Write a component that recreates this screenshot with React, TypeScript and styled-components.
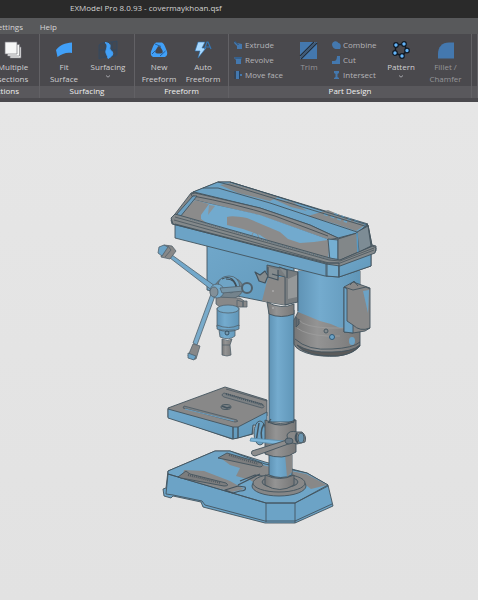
import React from 'react';
import styled, { createGlobalStyle } from 'styled-components';

const GlobalStyle = createGlobalStyle`
  * { box-sizing: border-box; }
  body { margin: 0; background: #e4e4e4; }
  body, button { font-family: "Open Sans", "Noto Sans", sans-serif; font-size: 8px; line-height: 12px; }
`;

const Window = styled.div`
  display: flex;
  flex-direction: column;
  min-height: 100vh;
  overflow: hidden;
`;

const TitleBar = styled.header`
  height: 18px;
  padding: 2px 0 0 70px;
  background: #2a2a2a;
  color: #d2d2d2;
  white-space: nowrap;
`;

const MenuBar = styled.nav`
  display: flex;
  height: 16px;
  background: #58595b;
`;

const MenuSlot = styled.div<{ $width: number }>`
  display: flex;
  flex: 0 0 ${p => p.$width}px;
  justify-content: flex-end;
  align-items: center;
  overflow: hidden;
`;

const MenuButton = styled.button`
  padding: 2px 0 0;
  border: 0;
  background: none;
  color: #d6d6d6;
`;

const Ribbon = styled.div`
  display: flex;
  height: 68px;
  padding-bottom: 4px;
  background: #4a494d;
`;

const Group = styled.section<{ $width?: number }>`
  display: flex;
  flex-direction: column;
  flex: ${p => (p.$width ? `0 0 ${p.$width}px` : '1 0 0')};
  overflow: hidden;
  border-right: 1px solid #626165;
`;

const Tools = styled.div<{ $clipStart?: boolean }>`
  display: flex;
  flex: 1;
  justify-content: ${p => (p.$clipStart ? 'flex-end' : 'flex-start')};
  padding-right: ${p => (p.$clipStart ? 4 : 0)}px;
`;

const GroupTitle = styled.h2<{ $clipStart?: boolean }>`
  display: flex;
  justify-content: ${p => (p.$clipStart ? 'flex-end' : 'center')};
  height: 12px;
  margin: 0;
  padding-right: ${p => (p.$clipStart ? 20 : 0)}px;
  background: #59585c;
  color: #f0f0f0;
  font-size: 8px;
  font-weight: 400;
  line-height: 10px;
`;

const BigTool = styled.button<{ $width: number }>`
  display: flex;
  flex-direction: column;
  align-items: center;
  flex: 0 0 ${p => p.$width}px;
  padding: 6px 0 0;
  border: 0;
  background: none;
  color: #d0d0d2;
  white-space: nowrap;
  &:disabled { color: #96969a; }
`;

const Label = styled.span`
  height: 12px;
`;

const SmallTools = styled.div<{ $width: number }>`
  display: flex;
  flex-direction: column;
  gap: 3px;
  flex: 0 0 ${p => p.$width}px;
  padding: 5px 0 0 4px;
`;

const SmallTool = styled.button`
  display: flex;
  align-items: center;
  gap: 2px;
  padding: 0;
  border: 0;
  background: none;
  color: #b4b4b8;
  white-space: nowrap;
`;

const Viewport = styled.main`
  flex: 1;
  padding: 68px 0 0 150px;
  background: linear-gradient(#e6e6e6, #e2e2e2);
`;

const Model = styled.svg`
  display: block;
`;

const ToolIcon = styled.svg`
  flex: none;
  margin-bottom: 1px;
`;

const ChevronIcon = styled.svg`
  flex: none;
  margin-top: 1px;
`;

const Icon = ({ children }: { children: React.ReactNode }) => (
  <ToolIcon width="20" height="20" viewBox="0 0 20 20" aria-hidden="true">{children}</ToolIcon>
);

const SmallIcon = ({ children }: { children: React.ReactNode }) => (
  <svg width="10" height="10" viewBox="0 0 10 10" aria-hidden="true" fill="#4478ae">{children}</svg>
);

const Chevron = () => (
  <ChevronIcon width="6" height="5" viewBox="0 0 6 5" aria-hidden="true">
    <path d="M1 1.5 3 3.2 5 1.5" fill="none" stroke="#a5a5aa" />
  </ChevronIcon>
);

const MultipleIcon = () => (
  <Icon>
    <g fill="#f7f7f7" stroke="#77777b" strokeWidth=".7">
      <path d="M7 7h11v11H7z" />
      <path d="M4.500 4.500h12v11.500h-12z" />
      <path d="M2 2h12v12H2z" />
    </g>
  </Icon>
);

const FitIcon = () => (
  <Icon><path d="M2 10C6 5 11 3 18 2.500V13C12 12 8 14 3.500 17Z" fill="#41a0f8" /></Icon>
);

const SurfacingIcon = () => (
  <Icon>
    <path d="M1 5c4-4 10-2 18-4v14c-4 3-13 1-18 4zM7 3v15M14 2v15M1 10h18" fill="#434851" stroke="#2f4a68" strokeWidth=".7" />
    <path d="M7 2.500c8 1 4 5 5 7 4 3 4 6-2 9 0-3-3-5-2-8 1-3 2-6-1-8Z" fill="#41a0f8" stroke="#41a0f8" />
  </Icon>
);

const FreeformIcon = () => (
  <Icon>
    <path d="m7 2.500 6 0q2 1 3 4l2 5q1 4-2 5.500H4q-3-1.500-2-5.500l2-5q1-3 3-4Z" fill="#41a0f8" />
    <path d="M10 6q1 0 2 2l1.500 2.500q1 3-2 3h-3q-3 0-2-3L8 8q1-2 2-2Z" fill="#46474e" />
    <path d="m6 4 6 2.500M3 14l3.500-3.500M16.500 11l-5.500 5" stroke="#2461a0" strokeWidth="1" />
  </Icon>
);

const AutoIcon = () => (
  <Icon>
    <path d="M5 2h7L9 8h4L5 18l2-7H2Z" fill="#a9d9ff" stroke="#286eaf" strokeWidth=".6" />
    <path d="m11.500 9 2.500-7h1l3 7M12.500 7h4.500" fill="none" stroke="#3478b8" strokeWidth="1.200" />
  </Icon>
);

const TrimIcon = () => (
  <Icon>
    <path d="M1 2h17v17H1z" fill="#4478ae" />
    <path d="M1 16 15 2M2 19 18 3" stroke="#252e39" strokeWidth="1.200" />
    <path d="M1 18 17 2" stroke="#4b5a6b" strokeWidth="1" />
  </Icon>
);

const PatternIcon = () => (
  <Icon>
    <path d="m5 5 8-1 3 6.500-5 5.500-7-3Z" fill="none" stroke="#101922" strokeWidth="1.500" />
    <g fill="#64b5fa" stroke="#111b26" strokeWidth="1.200">
      <circle cx="5" cy="5" r="2.300" /><circle cx="13" cy="4" r="2.300" />
      <circle cx="16" cy="10.500" r="2.300" /><circle cx="11" cy="16" r="2.300" />
      <circle cx="4" cy="13" r="2.300" />
    </g>
  </Icon>
);

const FilletIcon = () => (
  <Icon><path d="M2 18.500V14C2 7 6 2.500 13 2.500h5v16Z" fill="#4478ae" /></Icon>
);

const smallIcons = {
  Extrude: <><path d="M2 1l2 2 5 1v5H4V6L1 3Z" /><path d="m1.500 1 4 4" stroke="#294967" /></>,
  Revolve: <><path d="M2 2h7L8 5v4H3V5L1 3Z" /><path d="M2 3h7" stroke="#24496d" /></>,
  'Move face': <><path d="M3 1h3v8H3zM7 4h2v2H7z" /><path d="M2 1v8M6.500 1v8" stroke="#233f5d" /></>,
  Combine: <path d="M1 4a3.500 3.500 0 0 1 6.500-1c2 0 3 3 1.500 6H4.500C2 8.500 1 6 1 4Z" />,
  Cut: <path d="M1 9V6h2q3 0 3-5h3v8Z" />,
  Intersect: <path d="M3 1h5v2L6.500 4v3L8 8v1H3V8l1.500-1V4L3 3Z" />,
};

const SmallToolList = ({ width, names }: { width: number; names: (keyof typeof smallIcons)[] }) => (
  <SmallTools $width={width}>
    {names.map(name => (
      <SmallTool key={name} type="button" disabled>
        <SmallIcon>{smallIcons[name]}</SmallIcon>{name}
      </SmallTool>
    ))}
  </SmallTools>
);

const GRAY = '#888888';
const BLUE = '#6ca3c6';

const DrillPress = () => (
  <Model width="240" height="360" viewBox="150 170 240 360" role="img" aria-label="Drill press model">
    <defs>
      <linearGradient id="pole">
        <stop offset="0" stopColor="#5f93b5" /><stop offset=".35" stopColor="#74abce" /><stop offset="1" stopColor="#6096b8" />
      </linearGradient>
      <linearGradient id="steel">
        <stop offset="0" stopColor="#777" /><stop offset=".35" stopColor="#949494" /><stop offset="1" stopColor="#787878" />
      </linearGradient>
      <linearGradient id="face" x2="1" y2="1">
        <stop offset="0" stopColor="#70a7ca" /><stop offset="1" stopColor="#6299bb" />
      </linearGradient>
    </defs>
    <g stroke="#43535e" strokeWidth=".9" strokeLinejoin="round">
      <g>
        <path d="M168 471 215 451 230 451 265 462 307 473 328 485 333 506 295 523 265 523 203 507 201 502 173 496 171 498 164 496 163 489 166 488Z" fill={BLUE} />
        <path d="m168 471 47-20h15l35 13 42 9 21 12-33 18h-29l-98-29Z" fill="#6fa5c7" />
        <path d="m222 459 8-5 36 12 40 8 21 11-16 4-17-13-17 9-14 3-13-8-14-4 4-8-10-3Z" fill={GRAY} stroke="none" />
        <path d="m184 470 20 1 26 10 14 8-12 3-50-14Z" fill={GRAY} stroke="none" />
        <path d="m168 474 98 29v19M266 503h29v20M295 503l33-17M168 474l-2 20 7 1 29 6 3 4 60 16h30l37-17" fill="none" />
        <path d="m178 477 8-6 4 3 36 9q4 3-2 3l-43-8ZM218 458l9-5 34 10q4 3-1 4l-37-8Z" fill="#7c7d7e" />
        <path d="m188 475 33 8M229 455l29 9" stroke="#505a61" strokeWidth="2" strokeDasharray="1 1" />
        <path d="m225 490 13-4 7 1q2 4-5 4l-7 2ZM240 481l15-6 13 2M238 485l22-11" fill="none" strokeWidth="1.200" />
      </g>

      <g>
        <path d="m168 408 57-21 42 13v16l-14 8v10l-16 4-5 1-64-22Z" fill={GRAY} />
        <path d="m168 409 65 18v12l-65-21ZM233 427l5 0v11l-5 1ZM238 427l29-15v14l-14-1-1 9-14 4Z" fill="url(#face)" />
        <path d="m226 389 41 12M224 393l38 11q4 3 0 4l-38-11q-4-2 0-4ZM184 406l53 14q2 2-2 2l-52-14Z" fill="#7b8083" strokeWidth=".7" />
        <path d="m226 394 37 11" strokeWidth="2" strokeDasharray="1 1" />
        <path d="m185 409 49 12" stroke={BLUE} />
        <ellipse cx="226" cy="407" rx="5" ry="2.500" fill="#7b8184" />
        <path d="m222 406 5 2 3-1" fill="none" strokeWidth="1.500" />
      </g>

      <path d="M269 310h25v112h-25Z" fill="url(#pole)" />
      <ellipse cx="279" cy="486" rx="27" ry="10" fill="#858687" />
      <ellipse cx="279" cy="483" rx="26" ry="9" fill={GRAY} />
      <ellipse cx="280" cy="482" rx="18" ry="6" fill="#7b7f82" />
      <path d="M265 475q15 7 29 0v10q-14 9-29 0Z" fill="url(#steel)" />
      <path d="M269 455h23v20q-11 5-23 0Z" fill="url(#pole)" />
      <path d="m285 454 7 0v18l-5 5Z" fill={GRAY} stroke="none" />
      <ellipse cx="260" cy="433" rx="6" ry="12" fill={BLUE} />
      <path d="M264 424q-5 8-1 19M259 423l-3 19" fill="none" strokeWidth="1.500" />
      <path d="M265 420q15 7 31 0v32q-13 9-31 2Z" fill="url(#steel)" />
      <path d="m268 423 3-4M293 423l2-4M268 422q13 6 25 0" fill="none" strokeWidth="1.200" />
      <path d="M287 435q2-5 10-3h5q5 4 3 10l-8 2-9-2Z" fill={GRAY} />
      <ellipse cx="301" cy="438" rx="3" ry="5" fill="#6b96b1" /><path d="M297 433q-3 6 1 10" fill="none" strokeWidth="2" />
      <path d="m251 438 33 3v4l-34-4Z" fill="#7cb6da" stroke="#5e91b0" />
      <path d="m252 451 35-11 4 3-36 13q-5-1-3-5Z" fill="#8c8c8c" />
      <ellipse cx="289" cy="441" rx="4" ry="3" fill="#697782" />

      <path d="M207 245h87v57l-9 3-18-3-60-12Z" fill="url(#face)" />
      <path d="M267 281 262 301l5 1 18 3v-28h-16Z" fill="#8a8988" stroke="none" />
      <path d="M267 265 298 272v30l-13 3v-28l-18-5Z" fill="#777c7f" />
      <path d="m288 279 9-4v22l-9 2Z" fill="#959899" stroke="none" />
      <path d="m255 272 5 3 5-4 3 5-3 7-6-2-2-5ZM268 267v10l10 3v-10M272 274l7 2M279 267l8 3v8" fill="#858b8d" strokeWidth="1.200" />
      <path d="M267 302q14 8 27 2v10q-13 5-25 0Z" fill="url(#steel)" />
      <circle cx="273" cy="291" r="1" fill="#aaa" stroke="none" /><circle cx="273" cy="308" r="1" fill="#aaa" stroke="none" />

      <path d="M298 271h62v75q-12 14-46 9-18-4-20-11v-24l4-8Z" fill="url(#steel)" />
      <path d="M298 271h62v54q-5 3-20 3-10-5-20-7-12-5-22-9Z" fill="url(#pole)" stroke="none" />
      <path d="M298 272v39M295 339q13 12 37 10 21-1 28-7" fill="none" />
      <path d="M297 345q13 8 35 7 20 0 28-7-6 9-22 11-32 1-41-11Z" fill="#5a5a5a" />
      <path d="M299 320q5 7 30 8h15M297 328q9 7 30 8h13" fill="none" stroke="#a0a0a0" strokeWidth=".7" />
      <circle cx="332" cy="337" r="2.500" fill={BLUE} stroke="#285473" /><circle cx="326" cy="331" r="2" fill="#858b8e" />
      <ellipse cx="352" cy="341" rx="3" ry="4" fill={BLUE} stroke="none" />
      <path d="m344 287 9-5 17 6v40l-5 3-12 2-9-1Z" fill={GRAY} />
      <path d="M344 287v45l9 1v-8l-6-4v-32Z" fill={BLUE} />
      <path d="m344 287 9 3 13-3 4 2M353 325q7 7 17 3M350 285l4-4 4 5" fill="none" />
      <path d="m363 291 6-1-1 23Z" fill={BLUE} stroke="none" />
      <path d="M296 317v10l3-3v-5" fill="#646b70" />
    </g>

    <g stroke="#43535e" strokeWidth=".9" strokeLinejoin="round">
      <path d="M175 219 340 258 371 246v20l-32 11-14-1-150-38Z" fill={BLUE} />
      <path d="m326 261 13 0v16l-13-1Z" fill="#73abcd" />
      <path d="m339 262 32-12v16l-32 11Z" fill="url(#face)" />
      <path d="m171 220 4-6 16-21 27-11h12l138 43 4 20 4 1v5l-35 14-14-2-155-39Z" fill={GRAY} />
      <path d="m193 192 25-10h12l138 42-11 9-19 5-28-13-50-17-66-16Z" fill={BLUE} />
      <path d="m230 183 48 14-8 4-32-8-18-8ZM271 198l22 4 14 9-16-4ZM308 216l20-6 24 10 13 5-9 6-20-7Z" fill="#87898a" stroke="none" />
      <path d="m324 214 23 8M334 214l24 8" stroke={BLUE} strokeWidth="2" strokeDasharray="4 3" />
      <path d="M203 188l15 0 52 15 87 29M218 182l12 3 138 42M230 182l138 43" fill="none" />
      <path d="m191 194 4-1 65 15 50 17 28 13-10 2-68-24-66-16Z" fill="#86898b" />
      <path d="M193 196q39 7 82 20l53 20" fill="none" stroke="#4c565c" strokeWidth="1" />
      <path d="m194 200 66 15 67 24 2 22-153-43Z" fill="#72aace" stroke="none" />
      <path d="m195 200 14 4-8 11 0 4 7 5-31-7ZM227 217q5-2 20 1l33 14 8 7 12 4 14-1 14-2v21l-42-12-14-6-12-8-17-6-16-4Z" fill="#8b8b8b" stroke="none" />
      <path d="m209 205 6 1-7 9Z" fill="#8b9499" stroke="none" />
      <path d="M252 236q0-5 5-3l2 5" fill="none" stroke="#868b8e" />
      <path d="m176 215 17-19 4 0-17 21Z" fill="#6c9fc0" />
      <path d="m328 239 10 1v21l-8 0Z" fill="#75afd2" />
      <path d="m338 239 19-6 11-8 4 21-34 15Z" fill="#828789" />
      <path d="m357 232 11-6 3 20-12 6Z" fill="#7d8c95" />
      <path d="m357 233 1 20" stroke="#5799c4" strokeWidth="1.500" />
      <path d="m175 214 155 44 10 2 33-14 3 2-1 5-35 13-14-2-153-40-2-6Z" fill="#84898b" />
      <path d="m175 217 154 43 11 1 34-13M174 220l155 43 11 0 34-13" fill="none" stroke="#48545c" strokeWidth=".8" />
      <path d="m190 219 139 40 10 0" fill="none" stroke="#526b7b" strokeDasharray="1 1" />
      <path d="m175 224 151 39 13 0M327 263v13M339 263v14" fill="none" />
    </g>

    <g stroke="#52616b" strokeWidth=".8" strokeLinejoin="round">
      <path d="m172 255 43 31-2 5-43-33Z" fill="#72a8cb" />
      <path d="m164 245 8 1 4 5-6 8-9-2Z" fill={GRAY} />
      <path d="m159 247 5-2 4 2-6 9-4-3Z" fill={BLUE} />
      <path d="m168 246 3 4-6 7" fill="none" />
      <ellipse cx="229" cy="288" rx="14" ry="11" fill="#74838c" />
      <path d="M218 287q0-11 11-11 10 0 11 12l-9 5Z" fill="#6fa4c5" />
      <path d="M222 279q12-6 16 12M226 279q10 0 10 10" fill="none" stroke="#414e57" strokeWidth="1.200" />
      <path d="m216 297 24 1 4 3v4l-6 2h-18l-4-3Z" fill={GRAY} />
      <path d="m237 300 6 2v5h-6ZM243 301h4v6h-4Z" fill={GRAY} />
      <path d="m215 296-18 49-4-2 18-49Z" fill="#79abcb" />
      <path d="m193 344 7 2-4 13-4 0-4-3Z" fill={GRAY} />
      <path d="m188 353 8 3-2 4-6-2Z" fill={BLUE} />
      <ellipse cx="217" cy="291" rx="7" ry="7" fill="#74a9ca" />
      <ellipse cx="214" cy="292" rx="4" ry="5" fill="#829099" />
      <path d="m220 288 24-2v5l-22 2Z" fill="#7794a5" />
      <circle cx="247" cy="288" r="5" fill={BLUE} strokeWidth="2" />
      <path d="M217 308h22v18q-10 6-22 1Z" fill="url(#pole)" />
      <ellipse cx="228" cy="309" rx="11" ry="4" fill="#76aac9" />
      <path d="M217 325q12 5 22 0v4q-11 5-22 0ZM219 330h16v6q-6 5-15 1Z" fill="url(#pole)" />
      <circle cx="227" cy="333" r="2" fill="#769ab0" stroke="#263f50" />
      <path d="M222 339q6 3 10 0l-2 6 1 10-4 1-5-1v-10Z" fill="url(#steel)" />
      <path d="M222 345h8" fill="none" />
    </g>
  </Model>
);

export default function App() {
  return (
    <>
      <GlobalStyle />
      <Window>
        <TitleBar>EXModel Pro 8.0.93 - covermaykhoan.qsf</TitleBar>
        <MenuBar>
          <MenuSlot $width={23}><MenuButton type="button">Settings</MenuButton></MenuSlot>
          <MenuSlot $width={34}><MenuButton type="button">Help</MenuButton></MenuSlot>
        </MenuBar>
        <Ribbon>
          <Group $width={40}>
            <Tools $clipStart>
              <BigTool type="button" $width={44}>
                <MultipleIcon /><Label>Multiple</Label><Label>sections</Label>
              </BigTool>
            </Tools>
            <GroupTitle $clipStart>Sections</GroupTitle>
          </Group>
          <Group $width={95}>
            <Tools>
              <BigTool type="button" $width={48}>
                <FitIcon /><Label>Fit</Label><Label>Surface</Label>
              </BigTool>
              <BigTool type="button" $width={40}>
                <SurfacingIcon /><Label>Surfacing</Label><Chevron />
              </BigTool>
            </Tools>
            <GroupTitle>Surfacing</GroupTitle>
          </Group>
          <Group $width={94}>
            <Tools>
              <BigTool type="button" $width={48}>
                <FreeformIcon /><Label>New</Label><Label>Freeform</Label>
              </BigTool>
              <BigTool type="button" $width={40}>
                <AutoIcon /><Label>Auto</Label><Label>Freeform</Label>
              </BigTool>
            </Tools>
            <GroupTitle>Freeform</GroupTitle>
          </Group>
          <Group $width={243}>
            <Tools>
              <SmallToolList width={62} names={['Extrude', 'Revolve', 'Move face']} />
              <BigTool type="button" disabled $width={36}>
                <TrimIcon /><Label>Trim</Label>
              </BigTool>
              <SmallToolList width={54} names={['Combine', 'Cut', 'Intersect']} />
              <BigTool type="button" $width={40}>
                <PatternIcon /><Label>Pattern</Label><Chevron />
              </BigTool>
              <BigTool type="button" disabled $width={49}>
                <FilletIcon /><Label>Fillet /</Label><Label>Chamfer</Label>
              </BigTool>
            </Tools>
            <GroupTitle>Part Design</GroupTitle>
          </Group>
          <Group aria-label="More tools"><Tools /><GroupTitle /></Group>
        </Ribbon>
        <Viewport><DrillPress /></Viewport>
      </Window>
    </>
  );
}
